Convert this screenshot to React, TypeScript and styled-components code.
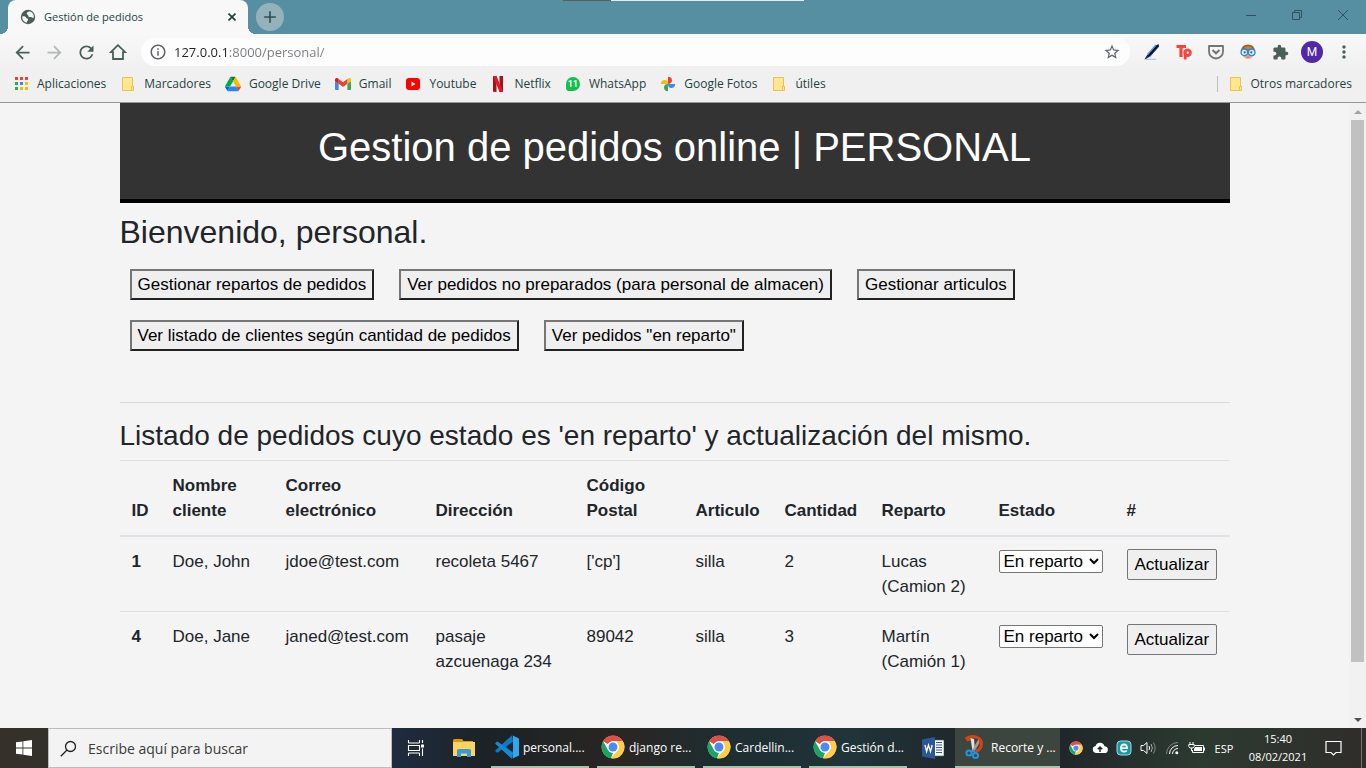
import React from "react";
import styled, { createGlobalStyle, css } from "styled-components";
import { MdArrowBack, MdArrowForward, MdRefresh, MdInfoOutline, MdStarBorder, MdExtension, MdMoreVert, MdAdd } from "react-icons/md";

const ui = `"Open Sans", "Noto Sans", sans-serif`;
const ink = "#1f423f";
const iconInk = "#4a5f5a";

const Global = createGlobalStyle`
  * { box-sizing: border-box; }
  html, body { margin: 0; padding: 0; }
  body { background: #f4f4f4; }
  button, input, select { font-family: inherit; margin: 0; }
  svg { display: block; flex: none; }
`;

const Desktop = styled.div`
  min-height: 100vh;
  display: flex;
  flex-direction: column;
`;

/* ---------- browser chrome ---------- */

const Browser = styled.header`
  font: 12px/16px ${ui};
  color: ${ink};
  background: #f0f0f0;
  border-bottom: 1px solid #979797;
`;

const TabStrip = styled.div`
  position: relative;
  height: 34px;
  background: #578fa2;
  display: flex;
  align-items: flex-start;
  padding-left: 8px;
`;

const OtherWindow = styled.div`
  position: absolute;
  top: 0;
  left: 563px;
  width: 241px;
  height: 1px;
  background: linear-gradient(90deg, #57625c 48px, #e4ebee 48px);
`;

const Tab = styled.div`
  position: relative;
  width: 240px;
  height: 34px;
  padding: 0 9px 0 12px;
  display: flex;
  align-items: center;
  gap: 8px;
  background: #f8f8f8;
  border-radius: 8px 8px 0 0;
  &::before, &::after {
    content: "";
    position: absolute;
    bottom: 0;
    width: 8px;
    height: 8px;
  }
  &::before {
    right: 100%;
    background: radial-gradient(circle at 0 0, transparent 8px, #f8f8f8 8px);
  }
  &::after {
    left: 100%;
    background: radial-gradient(circle at 100% 0, transparent 8px, #f8f8f8 8px);
  }
`;

const TabTitle = styled.span`
  flex: 1;
  font-size: 11px;
`;

const IconButton = styled.button<{ $size?: number; $color?: string }>`
  width: ${p => p.$size ?? 32}px;
  height: ${p => p.$size ?? 32}px;
  flex: none;
  padding: 0;
  border: 0;
  background: none;
  color: ${p => p.$color ?? iconInk};
  display: flex;
  align-items: center;
  justify-content: center;
`;

const NewTab = styled(IconButton)`
  margin: 3px 0 0 8px;
  border-radius: 50%;
  background: #94b2bb;
`;

const WindowButtons = styled.div`
  margin-left: auto;
  display: flex;
`;

const WindowButton = styled.button`
  width: 46px;
  height: 29px;
  padding: 0;
  border: 0;
  background: none;
  color: #32535e;
  display: flex;
  align-items: center;
  justify-content: center;
`;

const Toolbar = styled.div`
  height: 36px;
  padding: 0 6px;
  display: flex;
  align-items: center;
  background: linear-gradient(#f8f8f8, #f0f0f0);
`;

const Omnibox = styled.div`
  flex: 1;
  height: 28px;
  margin: 0 6px 0 7px;
  padding: 0 2px 0 8px;
  display: flex;
  align-items: center;
  gap: 7px;
  border-radius: 14px;
  background: #fdfdfd;
  color: #5f6368;
`;

const Address = styled.input`
  flex: 1;
  min-width: 0;
  height: 24px;
  padding: 0;
  border: 0;
  outline: 0;
  font-size: 13px;
  color: transparent;
  background: linear-gradient(90deg, #202124 54px, #777b7e 54px);
  -webkit-background-clip: text;
  background-clip: text;
`;

const Avatar = styled.span`
  width: 22px;
  height: 22px;
  border-radius: 50%;
  background: #5129a8;
  color: #fff;
  font: 12px/22px Roboto, sans-serif;
  text-align: center;
`;

const Bookmarks = styled.nav`
  height: 32px;
  padding: 0 14px 4px 13px;
  display: flex;
  align-items: center;
  gap: 14px;
`;

const Bookmark = styled.a<{ $end?: boolean }>`
  display: flex;
  align-items: center;
  gap: 8px;
  color: inherit;
  text-decoration: none;
  white-space: nowrap;
  font-size: 12px;
  ${p => p.$end && css`
    margin-left: auto;
    padding-left: 10px;
    gap: 6px;
    border-left: 1px solid #b9c1c1;
  `}
`;

/* ---------- page ---------- */

const Viewport = styled.div`
  flex: 1;
  display: flex;
  background: #f4f4f4;
`;

const Page = styled.main`
  flex: 1;
  min-width: 0;
  font: 17px/25px "Liberation Sans", Arial, sans-serif;
  color: #212529;
`;

const Container = styled.div`
  max-width: 1140px;
  margin: 0 auto;
  padding: 0 15px;
`;

const Banner = styled.div`
  background: #333;
  border-bottom: 4px solid #000;
  padding: 20px 20px 28px;
  color: #fff;
  text-align: center;
`;

const Title = styled.h1`
  margin: 0;
  font-size: 40px;
  line-height: 48px;
  font-weight: 500;
`;

const Welcome = styled.h2`
  margin: 10px 0 8px;
  font-size: 32px;
  line-height: 38px;
  font-weight: 500;
`;

const Actions = styled.div`
  display: flex;
  flex-wrap: wrap;
  gap: 20px 25px;
  padding: 10px;
`;

const ActionButton = styled.button`
  height: 31px;
  padding: 0 6px;
  border: 2px solid;
  border-color: #767676 #212121 #212121 #767676;
  background: #efefef;
  color: #000;
  font-size: 17px;
`;

const Rule = styled.hr`
  margin: 41px 0 16px;
  border: 0;
  border-top: 1px solid #dadada;
`;

const Subtitle = styled.h3`
  margin: 0 0 7px;
  font-size: 28px;
  line-height: 34px;
  font-weight: 500;
`;

const Table = styled.table`
  width: 100%;
  border-collapse: collapse;
  text-align: left;
  th, td {
    padding: 12px;
    vertical-align: top;
    border-top: 1px solid #dee2e6;
  }
  thead th {
    vertical-align: bottom;
    border-bottom: 2px solid #dee2e6;
  }
`;

const Column = styled.col<{ $w: number }>`
  width: ${p => p.$w}px;
`;

const Estado = styled.select`
  display: block;
  width: 104px;
  height: 23px;
  margin-top: 1px;
  border: 1px solid #767676;
  border-radius: 2px;
  background: #fff;
  color: #000;
  font-size: 17px;
`;

const Update = styled.button`
  display: block;
  height: 31px;
  padding: 0 7px;
  border: 1px solid #767676;
  border-radius: 2px;
  background: #efefef;
  color: #000;
  font-size: 17px;
`;

const ScrollBar = styled.div`
  width: 17px;
  display: flex;
  flex-direction: column;
  background: #f1f1f1;
`;

const ScrollArrow = styled.button`
  height: 17px;
  padding: 0;
  border: 0;
  background: none;
  display: flex;
  align-items: center;
  justify-content: center;
`;

const Track = styled.div`
  flex: 1;
  padding: 0 2px;
  display: flex;
  flex-direction: column;
`;

const Thumb = styled.div`
  flex: 0 0 calc(100% * 11 / 12);
  background: #c1c1c1;
`;

/* ---------- taskbar ---------- */

const Taskbar = styled.footer`
  height: 40px;
  display: flex;
  font: 12px/16px ${ui};
  color: #fff;
  background: linear-gradient(90deg, #35312a 0, #33302a 48px, #1f2b40 392px, #1c2226 490px, #2a2623 625px, #1e2d30 720px, #20343a 850px, #20292b 950px, #20272a 1065px, #2c3a30 1200px, #302d2a 1366px);
`;

const TaskIcon = styled.button<{ $w: number }>`
  width: ${p => p.$w}px;
  height: 40px;
  flex: none;
  padding: 0;
  border: 0;
  background: none;
  color: #fff;
  display: flex;
  align-items: center;
  justify-content: center;
`;

const Pinned = styled.div`
  display: flex;
  width: 99px;
`;

const SearchBox = styled.label`
  width: 344px;
  padding: 0 11px;
  display: flex;
  align-items: center;
  gap: 11px;
  background: #f3f3f3;
  border: 1px solid #bdbdbd;
  color: #222;
`;

const SearchInput = styled.input`
  flex: 1;
  min-width: 0;
  padding: 0;
  border: 0;
  outline: 0;
  background: none;
  font-size: 14px;
  &::placeholder { color: #3a3a3a; opacity: 1; }
`;

const Task = styled.button<{ $active?: boolean }>`
  width: ${p => (p.$active ? 105 : 98)}px;
  height: 40px;
  flex: none;
  padding: 0 0 0 ${p => (p.$active ? 8 : 4)}px;
  margin-right: ${p => (p.$active ? 0 : 8)}px;
  border: 0;
  border-bottom: 2px solid #a3c3ac;
  background: ${p => (p.$active ? "#3d463e" : "none")};
  color: #fff;
  font-size: 12px;
  display: flex;
  align-items: center;
  gap: 4px;
  white-space: nowrap;
`;

const Tray = styled.div`
  margin-left: auto;
  display: flex;
  align-items: center;
`;

const Language = styled(TaskIcon)`
  font-size: 11px;
`;

const Clock = styled.time`
  width: 76px;
  font-size: 11px;
  line-height: 18px;
  text-align: center;
`;

const Notifications = styled(TaskIcon)`
  margin-right: 11px;
`;

const ShowDesktop = styled(TaskIcon)`
  border-left: 1px solid #77756f;
`;

/* ---------- drawings ---------- */

const Svg = ({ w, h = w, vb, children }: { w: number; h?: number; vb?: string; children: React.ReactNode }) => (
  <svg width={w} height={h} viewBox={vb ?? `0 0 ${w} ${h}`} fill="none" aria-hidden="true">{children}</svg>
);

const Globe = () => (
  <Svg w={16}>
    <circle cx="8" cy="8" r="7.200" fill={iconInk} />
    <path d="M9.500 2.300C8 2.800 6.600 3.600 6.800 4.800 7 6 8.600 5.600 8.400 7 8.200 8 9.600 8.200 10.600 8c1.600-.3 1.300 1.300 3.200.8A6 6 0 0 0 9.500 2.300z" fill="#f8f8f8" />
    <path d="M2.200 7.500c1.400-.4 3.300.2 3.900 1.200.5.900 2 .5 2 1.900 0 1.300-1.300 1.400-1.400 3.100A6 6 0 0 1 2.200 7.500z" fill="#f8f8f8" />
  </Svg>
);

const Chrome = ({ size }: { size: number }) => (
  <Svg w={size} vb="0 0 48 48">
    <circle cx="24" cy="24" r="22.500" fill="#fff" />
    <path d="M24 1a23 23 0 0 1 19.900 11.500H24A11.500 11.500 0 0 0 14 18.300L4.100 12.500A23 23 0 0 1 24 1z" fill="#dd5144" />
    <path d="M4.100 12.500L14 29.750A11.500 11.500 0 0 0 24 35.500L20 46.700A23 23 0 0 1 4.100 12.500z" fill="#1da462" />
    <path d="M43.900 12.500A23 23 0 0 1 19.500 46.600L34 29.750A11.500 11.500 0 0 0 34 18.250L31 12.500z" fill="#ffcd46" />
    <circle cx="24" cy="24" r="11.500" fill="#fff" />
    <circle cx="24" cy="24" r="9" fill="#4c8bf5" />
  </Svg>
);

const AppsGrid = () => (
  <Svg w={16}>
    {["#ea4335", "#ea4335", "#ea4335", "#34a853", "#4285f4", "#fbbc05", "#34a853", "#fbbc05", "#fbbc05"].map((c, i) => (
      <rect key={i} x={2 + (i % 3) * 5} y={Math.floor(i / 3) * 5 + 1} width="3" height="3" fill={c} />
    ))}
  </Svg>
);

const Folder = () => (
  <Svg w={16}>
    <path d="M2.500 1.500h10v9h1v4h-11z" fill="#ffe693" stroke="#e9c34a" />
    <path d="M11.500 14v-3.500h2" stroke="#e9c34a" />
  </Svg>
);

const Drive = () => (
  <Svg w={16} vb="0 0 87.3 78">
    <path d="M6.600 66.850l3.850 6.650c.8 1.400 1.950 2.500 3.300 3.300L27.500 53H0c0 1.550.4 3.100 1.200 4.500z" fill="#0066da" />
    <path d="M43.650 25L29.900 1.200c-1.350.8-2.500 1.900-3.300 3.300l-25.400 44A9.060 9.060 0 0 0 0 53h27.500z" fill="#00ac47" />
    <path d="M73.550 76.800c1.350-.8 2.500-1.900 3.300-3.300l9.250-16c.8-1.400 1.200-2.950 1.200-4.500H59.800l5.850 11.500z" fill="#ea4335" />
    <path d="M43.650 25L57.400 1.200C56.050.4 54.500 0 52.900 0H34.400c-1.600 0-3.150.450-4.500 1.200z" fill="#00832d" />
    <path d="M59.800 53H27.500L13.750 76.800c1.350.8 2.900 1.200 4.500 1.200h50.800c1.600 0 3.150-.450 4.500-1.200z" fill="#2684fc" />
    <path d="M73.400 26.500L60.700 4.500c-.8-1.400-1.950-2.500-3.300-3.300L43.650 25 59.800 53h27.450c0-1.550-.4-3.100-1.200-4.500z" fill="#ffba00" />
  </Svg>
);

const Gmail = () => (
  <Svg w={16} h={12} vb="52 42 88 66">
    <path fill="#4285f4" d="M58 108h14V74L52 59v43c0 3.320 2.690 6 6 6" />
    <path fill="#34a853" d="M120 108h14c3.320 0 6-2.690 6-6V59l-20 15" />
    <path fill="#fbbc04" d="M120 48v26l20-15v-8c0-7.420-8.470-11.650-14.400-7.200" />
    <path fill="#ea4335" d="M72 74V48l24 18 24-18v26L96 92" />
    <path fill="#c5221f" d="M52 51v8l20 15V48l-5.600-4.200c-5.940-4.450-14.400-.220-14.400 7.200" />
  </Svg>
);

const YouTube = () => (
  <Svg w={16} h={12}>
    <rect x="1" width="14" height="12" rx="3" fill="#f00" />
    <path d="M6.500 3.500L10.500 6l-4 2.500z" fill="#fff" />
  </Svg>
);

const Netflix = () => (
  <Svg w={16}>
    <path d="M3 0h3.500v16L3 15.800zM9.500 0H13v15.800l-3.500.200z" fill="#a8101a" />
    <path d="M3 0h3.500L13 15.800l-3.500.200z" fill="#d81f26" />
  </Svg>
);

const WhatsAppLogo = styled.span`
  width: 14px;
  height: 14px;
  margin: 0 1px;
  border-radius: 50% 50% 50% 3px;
  background: #0fc14a;
  color: #fff;
  font: bold 9px/14px Roboto, sans-serif;
  text-align: center;
`;

const Photos = () => (
  <Svg w={16}>
    <path d="M8 .8C10.500.8 12 2.500 12 4.600 12 6.800 10.400 8 8 8z" fill="#ea4335" />
    <path d="M8 8h7.200c0 2.500-1.700 4-3.800 4C9.200 12 8 10.400 8 8z" fill="#4285f4" />
    <path d="M8 8v7.200c-2.500 0-4-1.700-4-3.800C4 9.200 5.600 8 8 8z" fill="#34a853" />
    <path d="M8 8H.8C.8 5.500 2.500 4 4.600 4 6.800 4 8 5.600 8 8z" fill="#fbbc04" />
  </Svg>
);

const HomeIcon = () => (
  <Svg w={18}>
    <path d="M9 2.200L1.800 9.200H4V16h10V9.200h2.200z" stroke={iconInk} strokeWidth="1.800" />
  </Svg>
);

const Pen = () => (
  <Svg w={18}>
    <path d="M3 16.300h10" stroke="#a9c3e8" strokeWidth="1.200" />
    <path d="M4 12.500L13.500 2l2.500-.8-.4 2.500L6 14l-4.500 2.500z" fill="#111" />
    <path d="M4.500 11.500L13 2" stroke="#5a96dc" strokeWidth="1.500" />
    <path d="M6.500 14l9.500-11" stroke="#1a2f9a" />
    <path d="M1.500 16.500L4 12.500 6 14z" fill="#20309c" />
  </Svg>
);

const TpLogo = () => (
  <Svg w={16}>
    <path d="M.500 2.500h9.500M5 2.500V13" stroke="#f9433f" strokeWidth="3.200" />
    <circle cx="11.600" cy="8.700" r="2.800" stroke="#f9433f" strokeWidth="2.800" />
    <path d="M9.200 6v9.500" stroke="#f9433f" strokeWidth="2.800" />
  </Svg>
);

const Pocket = () => (
  <Svg w={18}>
    <path d="M2 3h14v5.500a7 7 0 0 1-14 0z" stroke="#747474" strokeWidth="1.800" strokeLinejoin="round" />
    <path d="M5.500 7L9 10.300 12.500 7" stroke="#747474" strokeWidth="2" />
  </Svg>
);

const Face = () => (
  <Svg w={18}>
    <path d="M2 12C1.500 5 3.500 1.500 9 1.500S16.500 5 16 12z" fill="#9a6428" />
    <path d="M3.500 9h11c1 4-2 7-5.500 7s-6.500-3-5.500-7z" fill="#f0b080" />
    <path d="M4 6.500c1-2.500 3-3.300 5-3.300s4 .8 5 3.300z" fill="#c08838" />
    <circle cx="5.300" cy="9.300" r="3.300" fill="#d8effc" stroke="#2e86d4" strokeWidth="1.300" />
    <circle cx="12.700" cy="9.300" r="3.300" fill="#d8effc" stroke="#2e86d4" strokeWidth="1.300" />
    <circle cx="5.700" cy="9.300" r="1.100" fill="#1f62a8" />
    <circle cx="12.300" cy="9.300" r="1.100" fill="#1f62a8" />
    <path d="M7.500 14h3" stroke="#c46a4c" />
  </Svg>
);

const WindowsLogo = () => (
  <Svg w={16}>
    <path d="M0 2.300L6.500 1.400v6.100H0zM7.300 1.300L16 0v7.500H7.300zM0 8.400h6.500v6.200L0 13.700zM7.300 8.400H16V16l-8.700-1.300z" fill="#fff" />
  </Svg>
);

const SearchIcon = () => (
  <Svg w={17}>
    <circle cx="10.500" cy="6.500" r="5" stroke="#222" strokeWidth="1.300" />
    <path d="M7 10L.8 16.200" stroke="#222" strokeWidth="1.300" />
  </Svg>
);

const TaskView = () => (
  <Svg w={18} h={16}>
    <path d="M1.500 0v3M12.500 0v3M1.500 3h11M1.500 16v-3M12.500 16v-3M1.500 13h11M1.500 5.500h11v5h-11zM15.500 0v3M15.500 8.500V16" stroke="#fff" strokeWidth="1.100" />
    <rect x="14" y="4.500" width="3" height="3" fill="#fff" />
  </Svg>
);

const Explorer = () => (
  <Svg w={22} h={18}>
    <path d="M0 1.500Q0 0 1.500 0H9l1.500 2H20v3H0z" fill="#d99a08" />
    <rect y="3" width="22" height="14" fill="#fcd462" />
    <path d="M4 18v-6.500Q4 10 5.500 10h11q1.500 0 1.500 1.500V18h-4v-3.500H8V18z" fill="#3b9ad9" />
  </Svg>
);

const VsCode = () => (
  <Svg w={24} vb="0 0 100 100">
    <path d="M71 99L29 60 12 73q-2 1.500-4 0l-6-5q-2-2 0-4L71 1l4 26v46z" fill="#0d7ac4" />
    <path d="M71 99L2 37q-2-2 0-4l6-5q2-1.500 4 0l63 47z" fill="#1689d4" />
    <path d="M71 1l25 11q4 2 4 5v66q0 3-4 5L71 99q4-1 4-6V7q0-5-4-6z" fill="#2fa8f0" />
    <path d="M75 27L45 50l30 23z" fill="#20272a" />
  </Svg>
);

const Word = () => (
  <Svg w={22}>
    <path d="M11 3h11v16H11z" fill="#fff" stroke="#2b579a" strokeWidth=".6" />
    <path d="M14 5.500h6M14 8h6M14 10.500h6M14 13h6M14 15.500h6" stroke="#2b579a" />
    <path d="M0 2.500L13 0v22L0 19.500z" fill="#2b579a" />
    <path d="M3 8l1.600 6.500L6.500 8l2 6.500L10.200 8" stroke="#fff" strokeWidth="1.300" />
  </Svg>
);

const Snip = () => (
  <Svg w={24}>
    <path d="M3 3.500C10-.5 18.500 2 18.500 8.500c0 4-2.500 7.500-6 7.500" stroke="#d9420f" strokeWidth="3" />
    <path d="M2 2.500l7-1.500v4L4 6.500z" fill="#d9420f" />
    <path d="M7.500 3l2 13h2.500L11 4z" fill="#dfe4e8" />
    <path d="M15.500 4L9 15.500l2 1.500 5.500-9z" fill="#b4948c" />
    <circle cx="6" cy="18" r="2.600" stroke="#2196e0" strokeWidth="2" />
    <circle cx="12.500" cy="20.500" r="2.500" stroke="#2196e0" strokeWidth="2" />
    <path d="M8 17l3-1.500 1 2.500" stroke="#2196e0" strokeWidth="1.500" />
  </Svg>
);

const Cloud = () => (
  <Svg w={16} h={12}>
    <path d="M4 11a3.600 3.600 0 0 1-.4-7.100A4.700 4.700 0 0 1 12.500 4.200 3.400 3.400 0 0 1 12.400 11z" fill="#fff" />
    <path d="M8 10V6M5.800 7.300L8 5l2.200 2.300" stroke="#20272a" strokeWidth="1.500" />
  </Svg>
);

const ESet = () => (
  <Svg w={16}>
    <rect x="1" y="1" width="14" height="14" rx="3.500" fill="#1599a8" stroke="#a9dbe0" />
    <path d="M5 8.200h6c0-2-1-3.700-3-3.700S5 6 5 8.200s1.200 3.500 3 3.500c1.200 0 2-.4 2.700-1.200" stroke="#fff" strokeWidth="1.800" />
  </Svg>
);

const Volume = () => (
  <Svg w={17} h={14}>
    <path d="M1 4.500h2.500L7 1.500v11l-3.500-3H1z" stroke="#fff" />
    <path d="M9 5q1.300 2 0 4" stroke="#fff" />
    <path d="M11 3q2.700 4 0 8" stroke="#aaa" />
    <path d="M13.300 1.500q3.700 5.500 0 11" stroke="#888" />
  </Svg>
);

const Wifi = () => (
  <Svg w={14}>
    <path d="M1.500 13A11.500 11.500 0 0 1 13 1.500" stroke="#858985" />
    <path d="M4.500 13A8.500 8.500 0 0 1 13 4.500M7.500 13A5.500 5.500 0 0 1 13 7.500" stroke="#fff" />
    <circle cx="11.800" cy="11.800" r="1.500" fill="#fff" />
  </Svg>
);

const Battery = () => (
  <Svg w={17} h={12}>
    <path d="M7 3.500h8.500v7H4.500V8" stroke="#fff" />
    <path d="M7 5h7v4H6V7z" fill="#fff" />
    <path d="M16.500 5.500v3M2 0v2.500M5 0v2.500M.8 2.500h5.400v2L5 6H2L.8 4.500zM3.500 6v3" stroke="#fff" />
  </Svg>
);

const Notice = () => (
  <Svg w={17}>
    <path d="M1 1.500h15v11h-5L8.500 15 6 12.500H1z" stroke="#fff" strokeWidth="1.200" />
  </Svg>
);

/* ---------- data ---------- */

const bookmarks: [string, React.ReactNode][] = [
  ["Aplicaciones", <AppsGrid />],
  ["Marcadores", <Folder />],
  ["Google Drive", <Drive />],
  ["Gmail", <Gmail />],
  ["Youtube", <YouTube />],
  ["Netflix", <Netflix />],
  ["WhatsApp", <WhatsAppLogo>11</WhatsAppLogo>],
  ["Google Fotos", <Photos />],
  ["útiles", <Folder />],
];

const actions = [
  "Gestionar repartos de pedidos",
  "Ver pedidos no preparados (para personal de almacen)",
  "Gestionar articulos",
  "Ver listado de clientes según cantidad de pedidos",
  'Ver pedidos "en reparto"',
];

const columns: [string, number][] = [
  ["ID", 41],
  ["Nombre cliente", 113],
  ["Correo electrónico", 150],
  ["Dirección", 151],
  ["Código Postal", 109],
  ["Articulo", 89],
  ["Cantidad", 97],
  ["Reparto", 117],
  ["Estado", 128],
  ["#", 115],
];

const orders = [
  { id: 1, cells: ["Doe, John", "jdoe@test.com", "recoleta 5467", "['cp']", "silla", "2", "Lucas (Camion 2)"] },
  { id: 4, cells: ["Doe, Jane", "janed@test.com", "pasaje azcuenaga 234", "89042", "silla", "3", "Martín (Camión 1)"] },
];

export default function App() {
  return (
    <Desktop>
      <Global />
      <Browser>
        <TabStrip>
          <OtherWindow />
          <Tab>
            <Globe />
            <TabTitle>Gestión de pedidos</TabTitle>
            <IconButton $size={14} $color={ink} aria-label="Cerrar pestaña">
              <Svg w={8}><path d="M.5.5l7 7M7.500.5l-7 7" stroke="currentColor" strokeWidth="1.700" /></Svg>
            </IconButton>
          </Tab>
          <NewTab $size={28} $color="#344f4e" aria-label="Nueva pestaña"><MdAdd size={20} /></NewTab>
          <WindowButtons>
            <WindowButton aria-label="Minimizar"><Svg w={10}><path d="M0 5.500h10" stroke="currentColor" /></Svg></WindowButton>
            <WindowButton aria-label="Restaurar"><Svg w={10}><path d="M.5 2.500h7v7h-7zM2.500 2.500v-2h7v7h-2" stroke="currentColor" /></Svg></WindowButton>
            <WindowButton aria-label="Cerrar"><Svg w={10}><path d="M0 0l10 10M10 0L0 10" stroke="currentColor" /></Svg></WindowButton>
          </WindowButtons>
        </TabStrip>
        <Toolbar>
          <IconButton aria-label="Atrás"><MdArrowBack size={21} /></IconButton>
          <IconButton $color="#b3b9b7" aria-label="Adelante"><MdArrowForward size={21} /></IconButton>
          <IconButton aria-label="Recargar"><MdRefresh size={21} /></IconButton>
          <IconButton aria-label="Inicio"><HomeIcon /></IconButton>
          <Omnibox>
            <MdInfoOutline size={18} />
            <Address aria-label="Dirección web" defaultValue="127.0.0.1:8000/personal/" />
            <IconButton $color="#5f6368" aria-label="Añadir a marcadores"><MdStarBorder size={18} /></IconButton>
          </Omnibox>
          <IconButton aria-label="Resaltador"><Pen /></IconButton>
          <IconButton aria-label="TP"><TpLogo /></IconButton>
          <IconButton aria-label="Pocket"><Pocket /></IconButton>
          <IconButton aria-label="Lector"><Face /></IconButton>
          <IconButton aria-label="Extensiones"><MdExtension size={17} /></IconButton>
          <IconButton aria-label="Perfil"><Avatar>M</Avatar></IconButton>
          <IconButton aria-label="Menú"><MdMoreVert size={20} /></IconButton>
        </Toolbar>
        <Bookmarks>
          {bookmarks.map(([name, icon]) => (
            <Bookmark key={name} href="#">{icon}{name}</Bookmark>
          ))}
          <Bookmark href="#" $end><Folder />Otros marcadores</Bookmark>
        </Bookmarks>
      </Browser>

      <Viewport>
        <Page>
          <Container>
            <Banner><Title>Gestion de pedidos online | PERSONAL</Title></Banner>
            <Welcome>Bienvenido, personal.</Welcome>
            <Actions>
              {actions.map(a => <ActionButton key={a}>{a}</ActionButton>)}
            </Actions>
            <Rule />
            <Subtitle>Listado de pedidos cuyo estado es 'en reparto' y actualización del mismo.</Subtitle>
            <Table>
              <colgroup>
                {columns.map(([c, w]) => <Column key={c} $w={w} />)}
              </colgroup>
              <thead>
                <tr>{columns.map(([c]) => <th key={c} scope="col">{c}</th>)}</tr>
              </thead>
              <tbody>
                {orders.map(o => (
                  <tr key={o.id}>
                    <th scope="row">{o.id}</th>
                    {o.cells.map((c, i) => <td key={i}>{c}</td>)}
                    <td>
                      <Estado aria-label={`Estado del pedido ${o.id}`}>
                        <option>En reparto</option>
                      </Estado>
                    </td>
                    <td><Update>Actualizar</Update></td>
                  </tr>
                ))}
              </tbody>
            </Table>
          </Container>
        </Page>
        <ScrollBar>
          <ScrollArrow aria-label="Subir"><Svg w={8} h={4}><path d="M0 4l4-4 4 4z" fill="#a3a3a3" /></Svg></ScrollArrow>
          <Track><Thumb /></Track>
          <ScrollArrow aria-label="Bajar"><Svg w={8} h={4}><path d="M0 0l4 4 4-4z" fill="#505050" /></Svg></ScrollArrow>
        </ScrollBar>
      </Viewport>

      <Taskbar>
        <TaskIcon $w={48} aria-label="Inicio de Windows"><WindowsLogo /></TaskIcon>
        <SearchBox>
          <SearchIcon />
          <SearchInput placeholder="Escribe aquí para buscar" />
        </SearchBox>
        <Pinned>
          <TaskIcon $w={48} aria-label="Vista de tareas"><TaskView /></TaskIcon>
          <TaskIcon $w={48} aria-label="Explorador"><Explorer /></TaskIcon>
        </Pinned>
        <Task><VsCode />personal....</Task>
        <Task><Chrome size={24} />django re...</Task>
        <Task><Chrome size={24} />Cardellin...</Task>
        <Task><Chrome size={24} />Gestión d...</Task>
        <TaskIcon $w={36} aria-label="Word"><Word /></TaskIcon>
        <TaskIcon as="span" $w={4} />
        <Task $active><Snip />Recorte y ...</Task>
        <Tray>
          <TaskIcon $w={24} aria-label="Chrome"><Chrome size={14} /></TaskIcon>
          <TaskIcon $w={24} aria-label="Copia de seguridad"><Cloud /></TaskIcon>
          <TaskIcon $w={24} aria-label="Antivirus"><ESet /></TaskIcon>
          <TaskIcon $w={24} aria-label="Volumen"><Volume /></TaskIcon>
          <TaskIcon $w={24} aria-label="Red"><Wifi /></TaskIcon>
          <TaskIcon $w={24} aria-label="Batería"><Battery /></TaskIcon>
          <Language $w={32}>ESP</Language>
          <Clock>15:40<br />08/02/2021</Clock>
          <Notifications $w={34} aria-label="Notificaciones"><Notice /></Notifications>
          <ShowDesktop $w={5} aria-label="Mostrar escritorio" />
        </Tray>
      </Taskbar>
    </Desktop>
  );
}
